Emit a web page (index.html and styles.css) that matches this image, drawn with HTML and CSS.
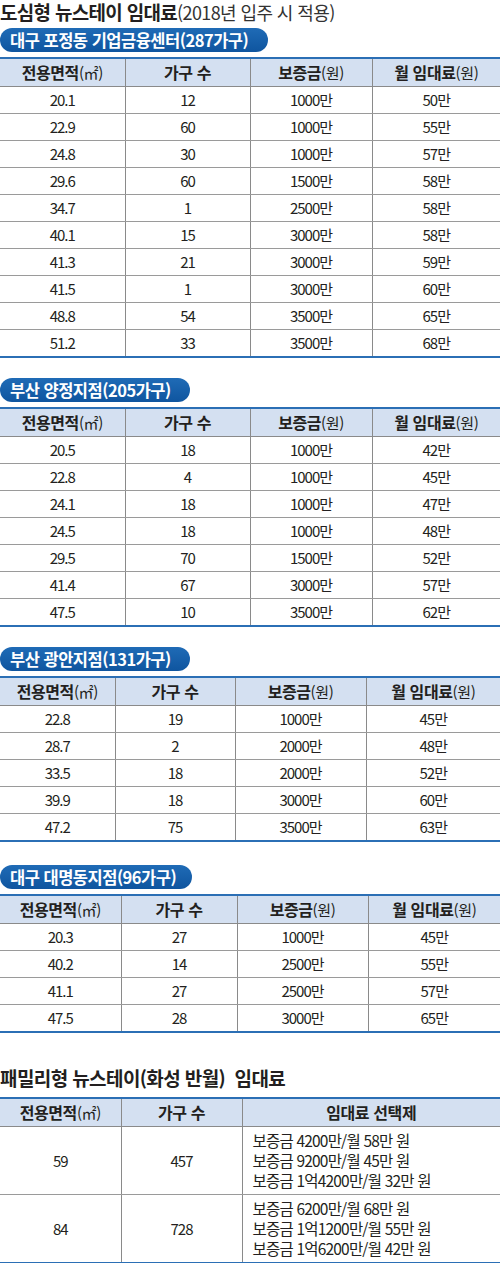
FILE: index.html
```html
<!DOCTYPE html>
<html lang="ko">
<head>
    <meta charset="UTF-8">
    <title>뉴스테이 임대료</title>
    <link rel="stylesheet" href="styles.css">
</head>
<body>
    <div class="page">
        <h1 class="page-title">도심형 뉴스테이 임대료<span class="title-note">(2018년 입주 시 적용)</span></h1>

        <!-- 대구 포정동 -->
        <div class="block block-first">
            <div class="badge badge-long">대구 포정동 기업금융센터(287가구)</div>
            <table class="rent-table cols-a">
                <colgroup><col><col><col><col></colgroup>
                <thead>
                    <tr>
                        <th>전용면적<span class="unit">(㎡)</span></th>
                        <th>가구 수</th>
                        <th>보증금<span class="unit">(원)</span></th>
                        <th>월 임대료<span class="unit">(원)</span></th>
                    </tr>
                </thead>
                <tbody>
                    <tr><td>20.1</td><td>12</td><td>1000만</td><td>50만</td></tr>
                    <tr><td>22.9</td><td>60</td><td>1000만</td><td>55만</td></tr>
                    <tr><td>24.8</td><td>30</td><td>1000만</td><td>57만</td></tr>
                    <tr><td>29.6</td><td>60</td><td>1500만</td><td>58만</td></tr>
                    <tr><td>34.7</td><td>1</td><td>2500만</td><td>58만</td></tr>
                    <tr><td>40.1</td><td>15</td><td>3000만</td><td>58만</td></tr>
                    <tr><td>41.3</td><td>21</td><td>3000만</td><td>59만</td></tr>
                    <tr><td>41.5</td><td>1</td><td>3000만</td><td>60만</td></tr>
                    <tr><td>48.8</td><td>54</td><td>3500만</td><td>65만</td></tr>
                    <tr><td>51.2</td><td>33</td><td>3500만</td><td>68만</td></tr>
                </tbody>
            </table>
        </div>

        <!-- 부산 양정 -->
        <div class="block">
            <div class="badge">부산 양정지점(205가구)</div>
            <table class="rent-table cols-a">
                <colgroup><col><col><col><col></colgroup>
                <thead>
                    <tr>
                        <th>전용면적<span class="unit">(㎡)</span></th>
                        <th>가구 수</th>
                        <th>보증금<span class="unit">(원)</span></th>
                        <th>월 임대료<span class="unit">(원)</span></th>
                    </tr>
                </thead>
                <tbody>
                    <tr><td>20.5</td><td>18</td><td>1000만</td><td>42만</td></tr>
                    <tr><td>22.8</td><td>4</td><td>1000만</td><td>45만</td></tr>
                    <tr><td>24.1</td><td>18</td><td>1000만</td><td>47만</td></tr>
                    <tr><td>24.5</td><td>18</td><td>1000만</td><td>48만</td></tr>
                    <tr><td>29.5</td><td>70</td><td>1500만</td><td>52만</td></tr>
                    <tr><td>41.4</td><td>67</td><td>3000만</td><td>57만</td></tr>
                    <tr><td>47.5</td><td>10</td><td>3500만</td><td>62만</td></tr>
                </tbody>
            </table>
        </div>

        <!-- 부산 광안 -->
        <div class="block">
            <div class="badge">부산 광안지점(131가구)</div>
            <table class="rent-table cols-b">
                <colgroup><col><col><col><col></colgroup>
                <thead>
                    <tr>
                        <th>전용면적<span class="unit">(㎡)</span></th>
                        <th>가구 수</th>
                        <th>보증금<span class="unit">(원)</span></th>
                        <th>월 임대료<span class="unit">(원)</span></th>
                    </tr>
                </thead>
                <tbody>
                    <tr><td>22.8</td><td>19</td><td>1000만</td><td>45만</td></tr>
                    <tr><td>28.7</td><td>2</td><td>2000만</td><td>48만</td></tr>
                    <tr><td>33.5</td><td>18</td><td>2000만</td><td>52만</td></tr>
                    <tr><td>39.9</td><td>18</td><td>3000만</td><td>60만</td></tr>
                    <tr><td>47.2</td><td>75</td><td>3500만</td><td>63만</td></tr>
                </tbody>
            </table>
        </div>

        <!-- 대구 대명동 -->
        <div class="block block-wide">
            <div class="badge">대구 대명동지점(96가구)</div>
            <table class="rent-table cols-c">
                <colgroup><col><col><col><col></colgroup>
                <thead>
                    <tr>
                        <th>전용면적<span class="unit">(㎡)</span></th>
                        <th>가구 수</th>
                        <th>보증금<span class="unit">(원)</span></th>
                        <th>월 임대료<span class="unit">(원)</span></th>
                    </tr>
                </thead>
                <tbody>
                    <tr><td>20.3</td><td>27</td><td>1000만</td><td>45만</td></tr>
                    <tr><td>40.2</td><td>14</td><td>2500만</td><td>55만</td></tr>
                    <tr><td>41.1</td><td>27</td><td>2500만</td><td>57만</td></tr>
                    <tr><td>47.5</td><td>28</td><td>3000만</td><td>65만</td></tr>
                </tbody>
            </table>
        </div>

        <!-- 패밀리형 -->
        <div class="block block-family">
            <h2 class="section-title">패밀리형 뉴스테이(화성 반월)&nbsp;&nbsp;임대료</h2>
            <table class="rent-table cols-d">
                <colgroup><col><col><col></colgroup>
                <thead>
                    <tr>
                        <th>전용면적<span class="unit">(㎡)</span></th>
                        <th>가구 수</th>
                        <th>임대료 선택제</th>
                    </tr>
                </thead>
                <tbody>
                    <tr>
                        <td>59</td>
                        <td>457</td>
                        <td class="options">
                            <div>보증금 4200만/월 58만 원</div>
                            <div>보증금 9200만/월 45만 원</div>
                            <div>보증금 1억4200만/월 32만 원</div>
                        </td>
                    </tr>
                    <tr>
                        <td>84</td>
                        <td>728</td>
                        <td class="options">
                            <div>보증금 6200만/월 68만 원</div>
                            <div>보증금 1억1200만/월 55만 원</div>
                            <div>보증금 1억6200만/월 42만 원</div>
                        </td>
                    </tr>
                </tbody>
            </table>
        </div>
    </div>
</body>
</html>
```

FILE: styles.css
```css
body {
    margin: 0;
    background: #fff;
    color: #231f20;
    font-family: "Noto Sans CJK KR", "Noto Sans", sans-serif;
}
.page {
    width: 500px;
}
.page-title {
    margin: 0;
    font-size: 19px;
    line-height: 24px;
    font-weight: bold;
    letter-spacing: -0.7px;
    color: #231f20;
}
.title-note {
    font-weight: normal;
    font-size: 18px;
    color: #333;
    letter-spacing: -0.6px;
}
.block {
    margin-top: 20px;
}
.block-first {
    margin-top: 4px;
}
.block-wide {
    margin-top: 23px;
}
.block-family {
    margin-top: 33px;
}
.badge {
    box-sizing: border-box;
    width: fit-content;
    min-width: 190px;
    height: 24px;
    line-height: 24px;
    padding: 0 16px 0 10px;
    border-radius: 12px;
    background: linear-gradient(#1f6bb6, #0f559f);
    color: #fff;
    font-size: 16.5px;
    font-weight: bold;
    letter-spacing: -0.5px;
}
.badge-long {
    padding-right: 20px;
}
.section-title {
    margin: 0 0 7px;
    font-size: 19px;
    line-height: 24px;
    font-weight: bold;
    letter-spacing: -0.6px;
}
.rent-table {
    width: 500px;
    margin-top: 5px;
    border-collapse: collapse;
    table-layout: fixed;
    border-top: 2px solid #2b6fb5;
    border-bottom: 2px solid #2b6fb5;
}
.rent-table th {
    background: #d4e0f1;
    font-size: 16px;
    font-weight: bold;
    line-height: 27px;
    padding: 0;
    letter-spacing: -0.4px;
    border-bottom: 1px solid #8a8a8a;
}
.rent-table td {
    font-size: 15px;
    line-height: 26px;
    padding: 0;
    text-align: center;
    letter-spacing: -1px;
    border-bottom: 1px solid #9a9a9a;
}
.rent-table th + th,
.rent-table td + td {
    border-left: 1px solid #8a8a8a;
}
.unit {
    font-weight: normal;
    font-size: 15px;
}
.rent-table .options {
    text-align: left;
    padding: 3px 0 4px 10px;
    line-height: 20px;
    font-size: 15.5px;
    letter-spacing: -0.8px;
}

/* largeurs de colonnes */
.cols-a col:nth-child(1) { width: 125px; }
.cols-a col:nth-child(2) { width: 125px; }
.cols-a col:nth-child(3) { width: 122px; }
.cols-b col:nth-child(1) { width: 115px; }
.cols-b col:nth-child(2) { width: 120px; }
.cols-b col:nth-child(3) { width: 131px; }
.cols-c col:nth-child(1) { width: 121px; }
.cols-c col:nth-child(2) { width: 116px; }
.cols-c col:nth-child(3) { width: 131px; }
.cols-d col:nth-child(1) { width: 121px; }
.cols-d col:nth-child(2) { width: 121px; }
```
